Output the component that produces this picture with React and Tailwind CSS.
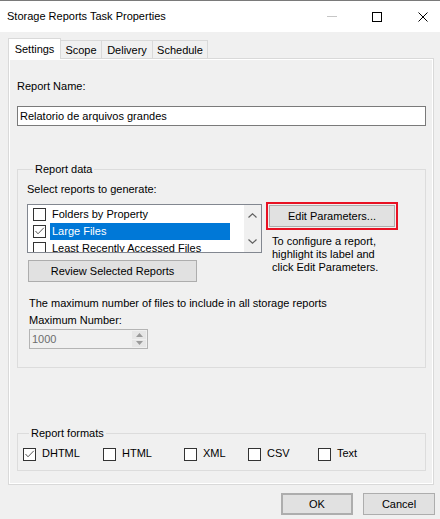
import React from 'react';

const Box = ({ checked }) => (
  <span className="w-[13px] h-[13px] border border-[#333333] bg-white flex items-center justify-center shrink-0">
    {checked && (
      <svg width="11" height="11" viewBox="0 0 11 11">
        <path d="M1.5 5 L4 7.8 L9.8 1.8" fill="none" stroke="#555555" strokeWidth="1" />
      </svg>
    )}
  </span>
);

const Tab = ({ label, width, active }) =>
  active ? (
    <div className={`relative z-10 h-[21px] -mb-px bg-white border-l border-t border-r border-[#d9d9d9] flex justify-center pt-[3px] ${width}`}>
      {label}
    </div>
  ) : (
    <div className={`h-[18px] bg-[#f0f0f0] border-t border-r border-[#d9d9d9] flex justify-center pt-[2px] ${width}`}>
      {label}
    </div>
  );

const Btn = ({ children, className = '' }) => (
  <button className={`h-[22px] bg-[#e1e1e1] border border-[#adadad] flex items-center justify-center ${className}`}>
    {children}
  </button>
);

export default function App() {
  const reports = [
    { name: 'Folders by Property', checked: false },
    { name: 'Large Files', checked: true, selected: true },
    { name: 'Least Recently Accessed Files', checked: false },
  ];
  const formats = [
    { name: 'DHTML', checked: true, w: 'w-[80px]' },
    { name: 'HTML', w: 'w-[81px]' },
    { name: 'XML', w: 'w-[64px]' },
    { name: 'CSV', w: 'w-[70px]' },
    { name: 'Text', w: '' },
  ];

  return (
    <div className="w-[440px] h-[519px] bg-[#f0f0f0] border-t border-[#7a7a7a] text-[11px] leading-[15px] text-black font-['Liberation_Sans',Arial,sans-serif] overflow-hidden">
      {/* title bar */}
      <div className="h-[31px] bg-white flex items-center">
        <span className="pl-[7px] text-[11px]">Storage Reports Task Properties</span>
        <div className="flex-1" />
        <div className="w-[45px] h-full flex items-center justify-center">
          <span className="block w-[10px] h-px bg-[#c6c6c6]" />
        </div>
        <div className="w-[46px] h-full flex items-center justify-center">
          <span className="block w-[10px] h-[10px] border border-black" />
        </div>
        <div className="w-[40px] h-full flex items-center justify-end pr-[12px]">
          <svg width="10" height="10" viewBox="0 0 10 10">
            <path d="M0.5 0.5 L9.5 9.5 M9.5 0.5 L0.5 9.5" stroke="#000" strokeWidth="1" />
          </svg>
        </div>
      </div>

      {/* tabs */}
      <div className="flex items-end pl-[8px] pt-[6px]">
        <Tab label="Settings" width="w-[53px]" active />
        <Tab label="Scope" width="w-[41px]" />
        <Tab label="Delivery" width="w-[51px]" />
        <Tab label="Schedule" width="w-[55px]" />
      </div>

      {/* tab page */}
      <div className="ml-[8px] w-[426px] h-[427px] border border-[#d9d9d9] bg-white p-px">
        <div className="h-full bg-[#f0f0f0] pl-[7px] pt-[19px]">
          <div>Report Name:</div>
          <div className="mt-[12px] w-[409px] h-[20px] border border-[#7a7a7a] bg-white pl-[2px] flex items-center">
            Relatorio de arquivos grandes
          </div>

          <fieldset className="mt-[36px] w-[409px] border border-[#dcdcdc] pl-[9px] pt-[5px] pb-[18px]">
            <legend className="ml-[6px] px-[2px]">Report data</legend>
            <div>Select reports to generate:</div>
            <div className="mt-[5px] flex items-start">
              <div>
                <div className="mt-[2px] w-[235px] h-[49px] border border-[#828790] bg-white flex overflow-hidden">
                  <div className="flex-1 pt-px pl-[5px] overflow-hidden">
                    {reports.map((r) => (
                      <div key={r.name} className="h-[17px] flex items-center whitespace-nowrap">
                        <Box checked={r.checked} />
                        <span className={`ml-[4px] pl-[2px] h-[17px] flex items-center ${r.selected ? 'w-[180px] bg-[#0078d7] text-white' : ''}`}>
                          {r.name}
                        </span>
                      </div>
                    ))}
                  </div>
                  <div className="w-[17px] bg-[#f0f0f0] flex flex-col items-center justify-between py-[8px]">
                    <svg width="9" height="5" viewBox="0 0 9 5">
                      <path d="M0.5 4.5 L4.5 0.8 L8.5 4.5" fill="none" stroke="#606060" strokeWidth="1.2" />
                    </svg>
                    <svg width="9" height="5" viewBox="0 0 9 5">
                      <path d="M0.5 0.5 L4.5 4.2 L8.5 0.5" fill="none" stroke="#606060" strokeWidth="1.2" />
                    </svg>
                  </div>
                </div>
                <Btn className="mt-[7px] ml-px w-[169px] h-[20px]">Review Selected Reports</Btn>
              </div>
              <div className="ml-[4px]">
                <div className="border-2 border-[#e81123] p-px w-[132px]">
                  <Btn className="w-full">Edit Parameters...</Btn>
                </div>
                <div className="mt-[5px] pl-[6px] leading-[13px]">
                  To configure a report,
                  <br />
                  highlight its label and
                  <br />
                  click Edit Parameters.
                </div>
              </div>
            </div>
            <div className="mt-[14px] ml-[2px]">The maximum number of files to include in all storage reports</div>
            <div className="mt-[2px] ml-[2px]">Maximum Number:</div>
            <div className="mt-px ml-[2px] w-[119px] h-[20px] border border-[#b4b4b4] flex">
              <div className="flex-1 pl-[2px] flex items-center text-[#6d6d6d]">1000</div>
              <div className="w-[14px] mr-px flex flex-col py-px gap-px">
                <div className="flex-1 bg-[#e6e6e6] flex items-center justify-center">
                  <svg width="7" height="4" viewBox="0 0 7 4">
                    <path d="M0 4 L3.5 0 L7 4 Z" fill="#9a9a9a" />
                  </svg>
                </div>
                <div className="flex-1 bg-[#e6e6e6] flex items-center justify-center">
                  <svg width="7" height="4" viewBox="0 0 7 4">
                    <path d="M0 0 L3.5 4 L7 0 Z" fill="#9a9a9a" />
                  </svg>
                </div>
              </div>
            </div>
          </fieldset>

          <fieldset className="mt-[58px] w-[409px] border border-[#dcdcdc] pl-[5px] pt-[7px] pb-[9px]">
            <legend className="ml-[6px] px-[2px]">Report formats</legend>
            <div className="flex items-center">
              {formats.map((f) => (
                <div key={f.name} className={`flex items-center ${f.w}`}>
                  <Box checked={f.checked} />
                  <span className="ml-[6px] -mt-[2px]">{f.name}</span>
                </div>
              ))}
            </div>
          </fieldset>
        </div>
      </div>

      {/* dialog buttons */}
      <div className="mt-[8px] flex justify-end gap-[10px] pr-[5px]">
        <Btn className="w-[72px] border-2 border-[#0078d7]">OK</Btn>
        <Btn className="w-[72px]">Cancel</Btn>
      </div>
    </div>
  );
}
